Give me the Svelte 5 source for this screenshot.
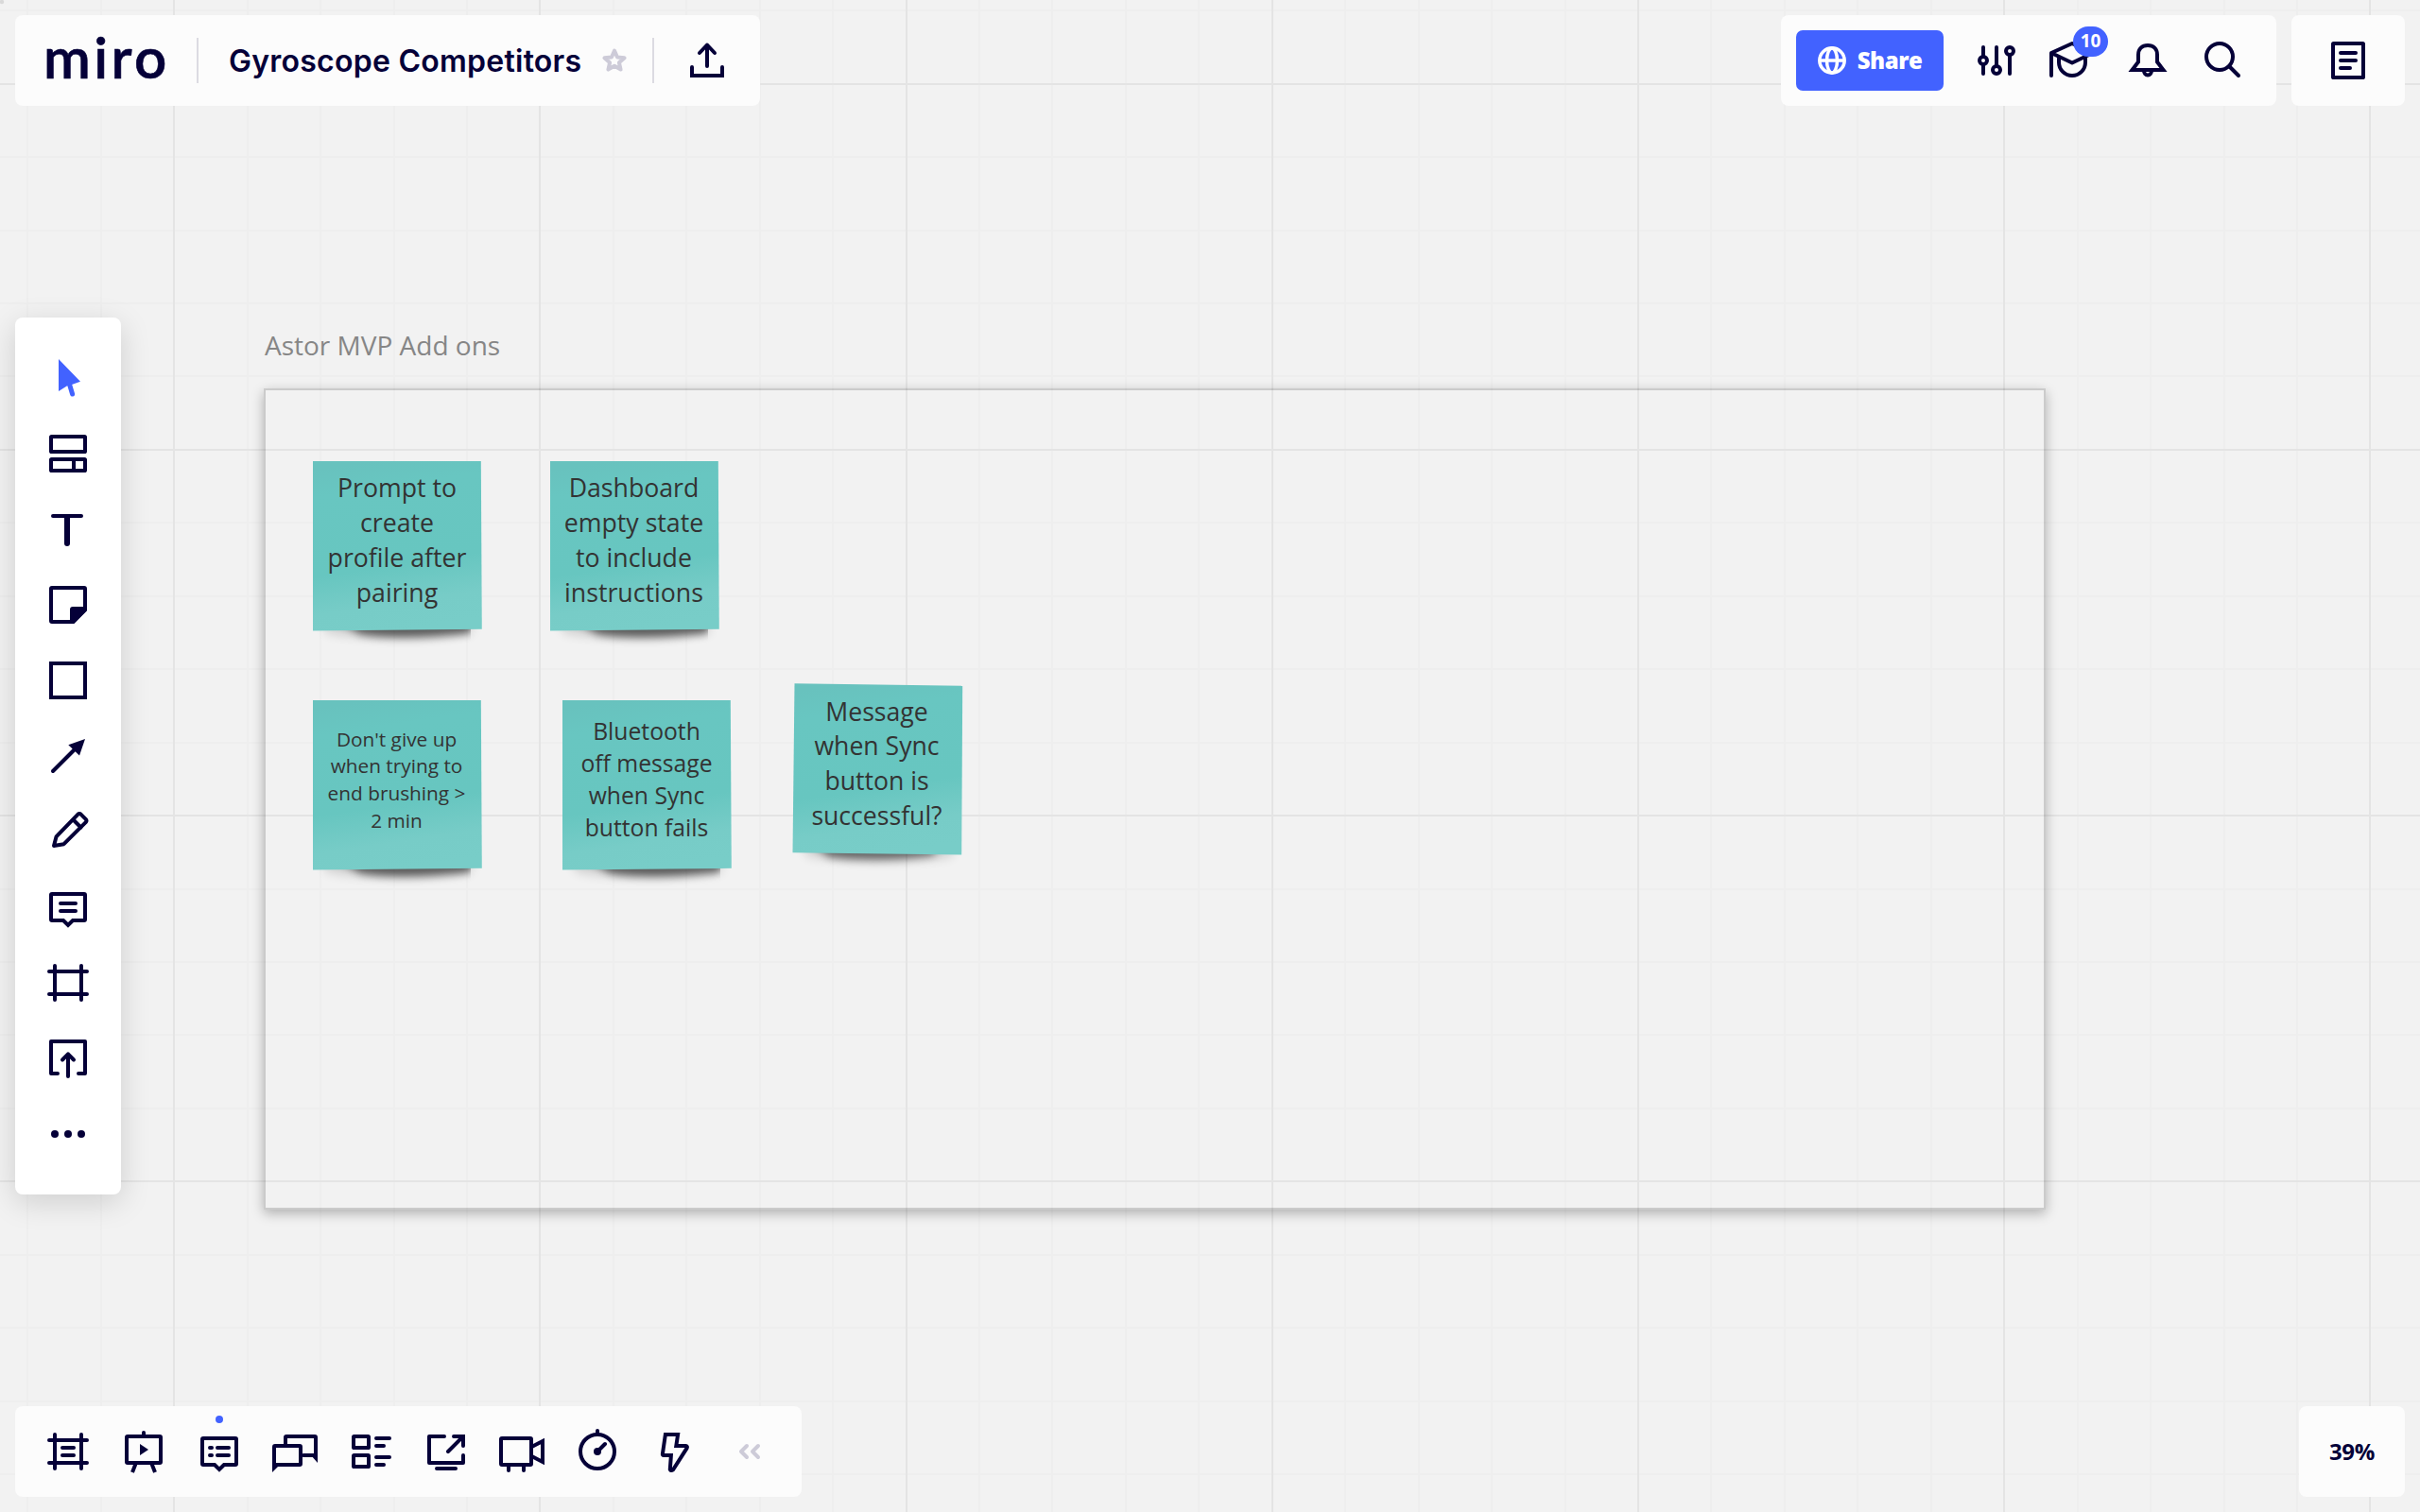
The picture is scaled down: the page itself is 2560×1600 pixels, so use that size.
<script lang="ts">
	// every icon sits in a 48x48 box, stroked with currentColor
	const tools = [
		{
			name: 'Select',
			active: true,
			icon: '<path d="M14 4 37 27.8 28 31 22.7 32.5 14 38Z" fill="currentColor" stroke="none"/><path d="M25 29 28.6 41" stroke-width="5"/>'
		},
		{
			name: 'Templates',
			icon: '<rect x="6" y="6" width="36" height="16" rx=".6"/><rect x="6" y="30" width="36" height="12" rx=".6"/><path d="M30 30v12" stroke-linecap="butt"/>'
		},
		{ name: 'Text', icon: '<path d="M8 10h30"/><path d="M23 11v28" stroke-width="6"/>' },
		{
			name: 'Sticky note',
			icon: '<path d="M7 6h34q1 0 1 1v22.4L29.4 42H7q-1 0-1-1V7q0-1 1-1z"/><path d="M26 44V29q0-3 3-3h15v4L30 44z" fill="currentColor" stroke="none"/>'
		},
		{ name: 'Shape', icon: '<path d="M6 6h36v36H6z" stroke-linejoin="miter"/>' },
		{
			name: 'Connection line',
			icon: '<path d="M8 40 31 17"/><path d="M42 6 24.3 12.2 36 23.6z" fill="currentColor" stroke="none"/>'
		},
		{
			name: 'Pen',
			icon: '<path d="M9 39 11.5 29.4 34.3 5.8q1.7-1.6 3.4 0l5 5q1.5 1.7 0 3.4L19.6 37.2z"/><path d="M30 12l7.5 7.5"/>'
		},
		{
			name: 'Comment',
			icon: '<path d="M7 10h34q1 0 1 1v26q0 1-1 1H29l-5 5-5-5H7q-1 0-1-1V11q0-1 1-1z" stroke-linejoin="miter"/><path d="M16 20h16M16 28h16"/>'
		},
		{ name: 'Frame', icon: '<path d="M10 6v36M38 6v36M4 12h40M4 36h40"/>' },
		{
			name: 'Upload',
			icon: '<path d="M13 40H6V6h36v34h-7M24 20v23M18 25.5l6-6.2 6 6.2"/>'
		},
		{
			name: 'More',
			icon: '<g fill="currentColor" stroke="none"><circle cx="10" cy="24" r="4"/><circle cx="24" cy="24" r="4"/><circle cx="38" cy="24" r="4"/></g>'
		}
	];

	const actions = [
		{
			name: 'Frames',
			icon: '<path d="M10 6v36M38 6v36M4 12h40M4 36h40M18 20h12M18 28h12"/>'
		},
		{
			name: 'Presentation',
			icon: '<rect x="6" y="8" width="36" height="28" rx="1"/><path d="M24 7V4"/><path d="M15.5 37 12 46M32.5 37 36 46" stroke-linecap="butt"/><path d="M20 16l9 6-9 6z" fill="currentColor" stroke="none"/>'
		},
		{
			name: 'Comments',
			dot: true,
			icon: '<path d="M7 10h34q1 0 1 1v26q0 1-1 1H29l-5 5-5-5H7q-1 0-1-1V11q0-1 1-1z" stroke-linejoin="miter"/><path d="M14 20h2M22 20h12M14 28h2M22 28h12"/>'
		},
		{
			name: 'Chat',
			icon: '<path d="M14 17V9q0-1 1-1h30q1 0 1 1v19H33"/><path d="M41 28h7v8z" fill="currentColor" stroke="none"/><path d="M2 38V19q0-1 1-1h26q1 0 1 1v18q0 1-1 1z"/><path d="M0 37h9l-9 9z" fill="currentColor" stroke="none"/>'
		},
		{
			name: 'Cards',
			icon: '<rect x="6" y="8" width="16" height="12" rx=".6"/><rect x="6" y="28" width="16" height="12" rx=".6"/><path d="M30 10h14M30 18h8M30 30h14M30 38h8"/>'
		},
		{
			name: 'Screen sharing',
			icon: '<path d="M22 8H6v28h36v-8M26 24 41 9M14 42h20"/><path d="M32 8h10v10" stroke-linejoin="miter"/>'
		},
		{
			name: 'Video chat',
			icon: '<rect x="2" y="10" width="32" height="28" rx="1"/><path d="M35 18.8 46 13v22l-11-5.8" stroke-linejoin="miter"/><path d="M10 39v5M26 39v5"/>'
		},
		{
			name: 'Timer',
			icon: '<circle cx="24" cy="24" r="18"/><path d="M24 5V2M25 23l7-7"/><circle cx="24" cy="24" r="4" fill="currentColor" stroke="none"/>'
		},
		{
			name: 'Voting',
			icon: '<path d="M15.9 6h13.2L27.3 18h9.9q2.4.4 1.4 2.4L24 43.4q-2.4 1.6-3.2-.4L21.9 28H14q-1.3 0-1.1-1.5z" stroke-linejoin="miter"/>'
		},
		{ name: 'Collapse', muted: true, icon: '<path d="M22 18l-6 6 6 6M34 18l-6 6 6 6"/>' }
	];

	const headerActions = [
		{
			name: 'Settings',
			icon: '<path d="M10 10v9M10 29v9M24 10v19M38 19v19"/><circle cx="10" cy="24" r="4"/><circle cx="24" cy="34" r="4"/><circle cx="38" cy="14" r="4"/>'
		},
		{
			name: 'Learning center',
			badge: '10',
			icon: '<path d="M2 40V16l22-10 22 10-22 10.5L2 16M10 20v6a14 14 0 0 0 28 0v-6"/>'
		},
		{
			name: 'Notifications',
			icon: '<path d="M24 8c-6 0-10 4-10 10v7.5L7.5 34h33L34 25.5V18c0-6-4-10-10-10z" stroke-linejoin="miter"/><path d="M20 35a4 4.6 0 0 0 8 0"/>'
		},
		{ name: 'Search', icon: '<circle cx="20" cy="20" r="14"/><path d="M30.5 30.5 40 40"/>' }
	];

	// board grid, five small cells to a large one
	const step = 77.44;
	const cols = Array.from({ length: 34 }, (_, i) => ({
		at: Math.round(184.2 + (i - 2) * step),
		major: (i - 2) % 5 === 0
	}));
	const rows = Array.from({ length: 21 }, (_, i) => ({
		at: Math.round(88.7 + (i - 1) * step),
		major: (i - 1) % 5 === 0
	}));
	const lines = (list: any[], major: boolean) => list.filter((l) => l.major === major);

	const notes = [
		{ x: 331, y: 488, size: 26.7, text: ['Prompt to', 'create', 'profile after', 'pairing'] },
		{ x: 581.5, y: 488, size: 26.7, text: ['Dashboard', 'empty state', 'to include', 'instructions'] },
		{ x: 330.5, y: 741, size: 20.8, text: ["Don't give up", 'when trying to', 'end brushing >', '2 min'] },
		{ x: 595, y: 741, size: 24.7, text: ['Bluetooth', 'off message', 'when Sync', 'button fails'] },
		{
			x: 838.5,
			y: 724,
			size: 26.6,
			tilted: true,
			text: ['Message', 'when Sync', 'button is', 'successful?']
		}
	];
</script>

{#snippet glyph(markup: string)}
	<svg class="icon" viewBox="0 0 48 48">{@html markup}</svg>
{/snippet}

<div class="app">
	<div class="board">
		<svg class="grid" width="2560" height="1600">
			{#each [false, true] as major}
				<g class={major ? 'major' : 'minor'}>
					{#each lines(cols, major) as l}
						<path d="M{l.at} 0V1600" />
					{/each}
					{#each lines(rows, major) as l}
						<path d="M0 {l.at}H2560" />
					{/each}
				</g>
			{/each}
			<circle class="origin" cx="2" cy="2" r="2.2" />
		</svg>

		<div class="frame-title">Astor MVP Add ons</div>
		<div class="frame"></div>

		{#each notes as note}
			<div class="note" style="left: {note.x}px; top: {note.y}px; font-size: {note.size}px;">
				<svg class="paper" viewBox="-20 -20 220 240">
					<defs>
						<linearGradient id="tint" x1=".35" y1="0" x2=".5" y2="1">
							<stop offset="0" stop-color="#68c2be" />
							<stop offset=".16" stop-color="#68c6c1" />
							<stop offset=".62" stop-color="#67c6c0" />
							<stop offset=".84" stop-color="#77ccc7" />
							<stop offset="1" stop-color="#78cdc8" />
						</linearGradient>
						<filter id="soft" x="-20%" y="-100%" width="140%" height="300%">
							<feGaussianBlur stdDeviation="4" />
						</filter>
						<filter id="wide" x="-20%" y="-100%" width="140%" height="300%">
							<feGaussianBlur stdDeviation="6" />
						</filter>
						<clipPath id="curl"><path d="M-20 160H167V240H-20z" /></clipPath>
					</defs>
					<path d="M10 165H168V182Q90 194 14 181z" opacity=".16" filter="url(#wide)" />
					{#if note.tilted}
						<path d="M20 168H156L148 181Q90 189 38 183z" opacity=".5" filter="url(#soft)" />
						<path d="M1.5-.8 179.2 1.8 178.2 180.5-.5 178.2z" fill="url(#tint)" />
					{:else}
						<g clip-path="url(#curl)">
							<path d="M26 168H172L166 182Q90 190 50 183z" opacity=".55" filter="url(#soft)" />
						</g>
						<path d="M0 0H177.8L178.8 177.8 0 179.5z" fill="url(#tint)" />
					{/if}
				</svg>
				<div class="note-text">
					{#each note.text as line}
						<span>{line}</span>
					{/each}
				</div>
			</div>
		{/each}
	</div>

	<div class="shell">
		<header>
			<div class="panel board-info">
				<span class="logo">miro</span>
				<i class="divider"></i>
				<span class="title">Gyroscope Competitors</span>
				<svg class="star" viewBox="0 0 28 28">
					<path
						d="M14 3.6l3 6.9 7.6.7-5.7 5 1.7 7.4L14 19.8l-6.6 3.8 1.7-7.4-5.7-5 7.6-.7z"
					/>
				</svg>
				<i class="divider"></i>
				<button class="export" aria-label="Export">
					{@render glyph(
						'<path d="M8 31v9h32v-9" stroke-linejoin="miter"/><path d="M24 8v22M16 16l8-8.5 8 8.5"/>'
					)}
				</button>
			</div>

			<div class="header-right">
				<div class="panel actions">
					<button class="share">
						<svg class="globe" viewBox="0 0 30 30">
							<circle cx="15" cy="15" r="13.2" />
							<ellipse cx="15" cy="15" rx="5.5" ry="13" />
							<path d="M2 15h26" />
						</svg>
						<span>Share</span>
					</button>
					{#each headerActions as action}
						<button class="header-action" aria-label={action.name}>
							{@render glyph(action.icon)}
							{#if action.badge}
								<span class="badge">{action.badge}</span>
							{/if}
						</button>
					{/each}
				</div>
				<div class="panel notes-panel">
					<button aria-label="Notes">
						{@render glyph(
							'<rect x="8" y="6" width="32" height="36" rx=".6"/><path d="M16 16h16M16 24h16M16 32h10"/>'
						)}
					</button>
				</div>
			</div>
		</header>

		<nav class="toolbar">
			{#each tools as tool}
				<button class:active={tool.active} aria-label={tool.name}>{@render glyph(tool.icon)}</button>
			{/each}
		</nav>

		<footer>
			<div class="panel bottom-bar">
				{#each actions as action}
					<button class:muted={action.muted} aria-label={action.name}>
						{@render glyph(action.icon)}
						{#if action.dot}
							<span class="dot"></span>
						{/if}
					</button>
				{/each}
			</div>
			<div class="panel zoom">39%</div>
		</footer>
	</div>
</div>

<style>
	:global(body) {
		margin: 0;
		background: #f2f2f2;
	}

	.app {
		position: relative;
		width: 2560px;
		height: 1600px;
		overflow: hidden;
		background: #f2f2f2;
		color: #050038;
		font-family: 'Open Sans', 'Noto Sans', sans-serif;
	}

	button {
		display: flex;
		align-items: center;
		justify-content: center;
		padding: 0;
		border: none;
		background: none;
		color: inherit;
		font: inherit;
		cursor: pointer;
	}

	/* board */

	.board {
		position: absolute;
		inset: 0;
	}

	.grid {
		position: absolute;
		inset: 0;
	}

	.grid path {
		stroke-width: 2;
	}

	.minor {
		stroke: #eeeeee;
	}

	.major {
		stroke: #e4e4e4;
	}

	.origin {
		fill: #d9d9d9;
	}

	.frame-title {
		position: absolute;
		left: 280px;
		top: 346px;
		font-size: 28px;
		line-height: 38px;
		color: #868686;
		white-space: nowrap;
	}

	.frame {
		position: absolute;
		box-sizing: border-box;
		left: 279px;
		top: 411px;
		width: 1885px;
		height: 869px;
		border: 2px solid rgba(0, 0, 0, 0.16);
		/* outline shadow only, the grid shows through */
		box-shadow: 0 4px 12px rgba(0, 0, 0, 0.28);
	}

	.note {
		position: absolute;
		width: 178px;
		height: 180px;
	}

	.paper {
		position: absolute;
		left: -20px;
		top: -20px;
		width: 220px;
		height: 240px;
	}

	.note-text {
		position: relative;
		display: flex;
		flex-direction: column;
		align-items: center;
		justify-content: center;
		box-sizing: border-box;
		height: 100%;
		padding-bottom: 12px;
		line-height: 1.38;
		color: #333;
		white-space: nowrap;
	}

	/* interface */

	.shell {
		position: relative;
		box-sizing: border-box;
		display: flex;
		flex-direction: column;
		align-items: stretch;
		justify-content: space-between;
		height: 100%;
		padding: 16px;
	}

	header,
	footer {
		display: flex;
		justify-content: space-between;
	}

	.panel {
		box-sizing: border-box;
		display: flex;
		align-items: center;
		height: 96px;
		border-radius: 8px;
		background: #fcfcfc;
	}

	.icon {
		display: block;
		width: 48px;
		height: 48px;
		overflow: visible;
		fill: none;
		stroke: currentColor;
		stroke-width: 4;
		stroke-linecap: round;
		stroke-linejoin: round;
	}

	.board-info {
		width: 788px;
		padding-left: 30px;
	}

	.logo {
		width: 162px;
		margin-top: -8px;
		font-family: Lato, sans-serif;
		font-size: 60px;
		font-weight: 600;
		line-height: 72px;
		letter-spacing: 3.4px;
		-webkit-text-stroke: 0.6px #050038;
	}

	.divider {
		width: 2px;
		height: 48px;
		background: #dcdbe2;
	}

	.title {
		width: 394px;
		margin-left: 32px;
		font-family: Inter, sans-serif;
		font-size: 32px;
		font-weight: 600;
		letter-spacing: 0.25px;
		white-space: nowrap;
	}

	.star {
		width: 28px;
		height: 28px;
		margin-right: 26px;
		fill: none;
		stroke: #cdcbd8;
		stroke-width: 4;
		stroke-linejoin: round;
	}

	.export {
		margin-left: 32px;
	}

	.header-right {
		display: flex;
		gap: 16px;
	}

	.actions {
		width: 524px;
		padding-left: 16px;
	}

	.share {
		gap: 12px;
		width: 156px;
		height: 64px;
		margin-right: 16px;
		border-radius: 7px;
		background: #4262ff;
		color: #fff;
		font-size: 24px;
		font-weight: 800;
		letter-spacing: -0.5px;
	}

	.share span {
		padding-bottom: 2px;
	}

	.globe {
		width: 30px;
		height: 30px;
		fill: none;
		stroke: #fff;
		stroke-width: 3.5;
	}

	.header-action {
		position: relative;
		width: 80px;
		height: 80px;
	}

	.badge {
		position: absolute;
		left: 41px;
		top: 4px;
		width: 37px;
		height: 32px;
		border-radius: 16px;
		background: #4262ff;
		color: #fff;
		font-size: 19px;
		font-weight: 700;
		line-height: 31px;
		text-align: center;
	}

	.notes-panel {
		justify-content: center;
		width: 120px;
	}

	.toolbar {
		width: 112px;
		padding: 24px 0;
		border-radius: 8px;
		background: #fff;
		box-shadow: 0 8px 32px rgba(0, 0, 0, 0.15);
	}

	.toolbar button {
		width: 112px;
		height: 80px;
	}

	.active {
		color: #4262ff;
	}

	.bottom-bar {
		padding: 0 16px;
	}

	.bottom-bar button {
		position: relative;
		width: 80px;
		height: 80px;
	}

	.muted {
		color: #cdcbd8;
	}

	.dot {
		position: absolute;
		left: 36px;
		top: 2px;
		width: 8px;
		height: 8px;
		border-radius: 50%;
		background: #4262ff;
	}

	.zoom {
		justify-content: center;
		width: 112px;
		padding-bottom: 2px;
		font-size: 24px;
		font-weight: 700;
		letter-spacing: -0.3px;
	}
</style>
